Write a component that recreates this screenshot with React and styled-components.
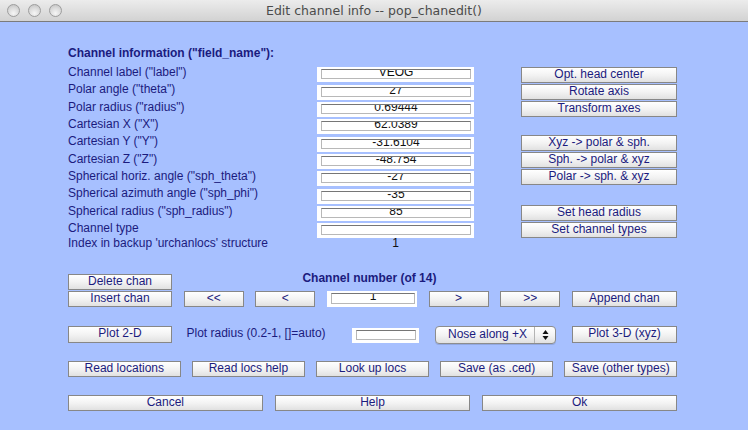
import React from 'react';
import styled, { createGlobalStyle } from 'styled-components';

const GlobalStyle = createGlobalStyle`
  html, body {
    margin: 0;
    padding: 0;
  }
  body {
    font-family: "Liberation Sans", Arial, sans-serif;
  }
`;

const Window = styled.div`
  width: 748px;
  height: 430px;
  overflow: hidden;
  background: #a7c0ff;
  color: #1b1b7e;
  font-size: 12px;
`;

const TitleBar = styled.div`
  height: 21px;
  border-bottom: 1px solid #7b7b7b;
  background: linear-gradient(#ececec, #d2d2d2);
  display: grid;
  grid-template-columns: 80px 1fr 80px;
  align-items: center;
`;

const Lights = styled.div`
  display: flex;
  gap: 8px;
  padding-left: 7px;
`;

const Light = styled.span`
  width: 13px;
  height: 13px;
  box-sizing: border-box;
  border-radius: 50%;
  border: 1px solid #9d9d9d;
  background: radial-gradient(circle at 50% 75%, #f6f6f6 0%, #dadada 55%, #bdbdbd 100%);
`;

const Title = styled.div`
  text-align: center;
  font-family: "DejaVu Sans", sans-serif;
  font-size: 12.5px;
  color: #4b4b4b;
  white-space: nowrap;
`;

const Content = styled.div`
  padding: 24px 0 0 68px;
  width: 609px;
`;

const Top = styled.div`
  display: flex;
`;

const LeftCol = styled.div`
  width: 406px;
`;

const Header = styled.div`
  font-weight: bold;
  line-height: 14px;
  height: 14px;
  margin-bottom: 5px;
  white-space: nowrap;
`;

const FieldRow = styled.div`
  display: grid;
  grid-template-columns: 249px 157px;
  align-items: start;
  height: ${p => (p.$compact ? 14 : 17.35)}px;
  margin-top: ${p => p.$shift || 0}px;
`;

const Label = styled.div`
  line-height: 14px;
  white-space: nowrap;
`;

const FieldFrame = styled.div`
  box-sizing: border-box;
  margin-top: 2.2px;
  height: 15px;
  padding: 2px 3px 3px 4px;
  background: #fff;
`;

const FieldBox = styled.div`
  box-sizing: border-box;
  height: 100%;
  border: 1px solid #b8b8b8;
  border-top-color: #767676;
  background: #fff;
  overflow: hidden;
  text-align: center;
  line-height: 5px;
  color: #111;
  white-space: nowrap;
`;

const IndexValue = styled.div`
  line-height: 14px;
  text-align: center;
  color: #111;
`;

const RightCol = styled.div`
  margin-left: 47px;
  width: 156px;
  padding-top: 21px;
  display: flex;
  flex-direction: column;
  gap: 1px;
`;

const Button = styled.button`
  box-sizing: border-box;
  height: ${p => p.$h || 16}px;
  margin: 0;
  padding: 0 0 2px;
  border: 1px solid #878787;
  border-radius: 0;
  background: linear-gradient(#ffffff 0%, #f3f3f3 50%, #e1e1e1 100%);
  font-family: "Liberation Sans", Arial, sans-serif;
  font-size: 12px;
  line-height: 12px;
  color: #1b1b7e;
  white-space: nowrap;
  text-align: center;
`;

const SideButton = styled(Button)`
  margin-top: ${p => p.$space || 0}px;
`;

const RowStartButton = styled(Button)`
  grid-column: 1;
`;

const Lower = styled.div`
  margin-top: 23.5px;
`;

const NavGrid = styled.div`
  display: grid;
  grid-template-columns: 104px 60px 60px 90px 60px 60px 105px;
  grid-auto-rows: 16px;
  column-gap: 11.67px;
  row-gap: 1px;
`;

const ChannelTitle = styled.div`
  grid-column: 2 / 7;
  text-align: center;
  font-weight: bold;
  line-height: 14px;
  margin-top: -3px;
  padding-right: 5px;
  white-space: nowrap;
`;

const NumberFrame = styled.div`
  box-sizing: border-box;
  height: 16px;
  padding: 2px 2px 3px 4px;
  background: #fff;
`;

const PlotRow = styled.div`
  margin-top: 19px;
  display: grid;
  grid-template-columns: 104px 1fr 67px 121px 105px;
  column-gap: 16px;
  align-items: start;
  height: 18px;
`;

const PlotLabel = styled.div`
  line-height: 14px;
  margin-left: -1.5px;
  white-space: nowrap;
`;

const RadiusFrame = styled(FieldFrame)`
  margin-top: 2px;
`;

const Popup = styled.div`
  box-sizing: border-box;
  height: 18px;
  display: flex;
  border: 1px solid #8d8d8d;
  border-radius: 4px;
  background: linear-gradient(#ffffff 0%, #f4f4f4 50%, #e0e0e0 100%);
  box-shadow: 0 1px 0 rgba(0, 0, 0, 0.12);
`;

const PopupText = styled.div`
  flex: 1;
  padding-left: 12px;
  line-height: 15px;
  white-space: nowrap;
`;

const PopupArrows = styled.div`
  width: 20px;
  border-left: 1px solid #b4b4b4;
  display: flex;
  align-items: center;
  justify-content: center;
`;

const ButtonRow = styled.div`
  margin-top: ${p => p.$space}px;
  display: grid;
  grid-template-columns: repeat(${p => p.$cols}, 1fr);
  column-gap: ${p => p.$gap}px;
`;

const fields = [
  ['Channel label ("label")', 'VEOG'],
  ['Polar angle ("theta")', '27'],
  ['Polar radius ("radius")', '0.69444'],
  ['Cartesian X ("X")', '62.0389'],
  ['Cartesian Y ("Y")', '-31.6104'],
  ['Cartesian Z ("Z")', '-48.754'],
  ['Spherical horiz. angle ("sph_theta")', '-27'],
  ['Spherical azimuth angle ("sph_phi")', '-35'],
  ['Spherical radius ("sph_radius")', '85'],
  ['Channel type', ''],
];

const sideButtons = [
  ['Opt. head center', 0],
  ['Rotate axis', 0],
  ['Transform axes', 0],
  ['Xyz -> polar & sph.', 17],
  ['Sph. -> polar & xyz', 0],
  ['Polar -> sph. & xyz', 0],
  ['Set head radius', 19],
  ['Set channel types', 0],
];

const Arrows = () => (
  <svg width="7" height="12" viewBox="0 0 7 12">
    <path d="M3.5 1 L6.5 5 L0.5 5 Z" fill="#111" />
    <path d="M3.5 11 L6.5 7 L0.5 7 Z" fill="#111" />
  </svg>
);

export default function App() {
  return (
    <>
      <GlobalStyle />
      <Window>
        <TitleBar>
          <Lights>
            <Light />
            <Light />
            <Light />
          </Lights>
          <Title>Edit channel info -- pop_chanedit()</Title>
        </TitleBar>
        <Content>
          <Top>
            <LeftCol>
              <Header>Channel information ("field_name"):</Header>
              {fields.map(([label, value]) => (
                <FieldRow key={label}>
                  <Label>{label}</Label>
                  <FieldFrame>
                    <FieldBox>{value}</FieldBox>
                  </FieldFrame>
                </FieldRow>
              ))}
              <FieldRow $compact $shift={-2}>
                <Label>Index in backup 'urchanlocs' structure</Label>
                <IndexValue>1</IndexValue>
              </FieldRow>
            </LeftCol>
            <RightCol>
              {sideButtons.map(([text, space]) => (
                <SideButton key={text} $space={space}>{text}</SideButton>
              ))}
            </RightCol>
          </Top>
          <Lower>
            <NavGrid>
              <Button>Delete chan</Button>
              <ChannelTitle>Channel number (of 14)</ChannelTitle>
              <RowStartButton>Insert chan</RowStartButton>
              <Button>{'<<'}</Button>
              <Button>{'<'}</Button>
              <NumberFrame>
                <FieldBox>1</FieldBox>
              </NumberFrame>
              <Button>{'>'}</Button>
              <Button>{'>>'}</Button>
              <Button>Append chan</Button>
            </NavGrid>
            <PlotRow>
              <Button $h={17}>Plot 2-D</Button>
              <PlotLabel>Plot radius (0.2-1, []=auto)</PlotLabel>
              <RadiusFrame>
                <FieldBox />
              </RadiusFrame>
              <Popup>
                <PopupText>Nose along +X</PopupText>
                <PopupArrows>
                  <Arrows />
                </PopupArrows>
              </Popup>
              <Button $h={17}>Plot 3-D (xyz)</Button>
            </PlotRow>
            <ButtonRow $space={17.5} $cols={5} $gap={11.5}>
              <Button>Read locations</Button>
              <Button>Read locs help</Button>
              <Button>Look up locs</Button>
              <Button>Save (as .ced)</Button>
              <Button>Save (other types)</Button>
            </ButtonRow>
            <ButtonRow $space={18} $cols={3} $gap={12.5}>
              <Button>Cancel</Button>
              <Button>Help</Button>
              <Button>Ok</Button>
            </ButtonRow>
          </Lower>
        </Content>
      </Window>
    </>
  );
}
